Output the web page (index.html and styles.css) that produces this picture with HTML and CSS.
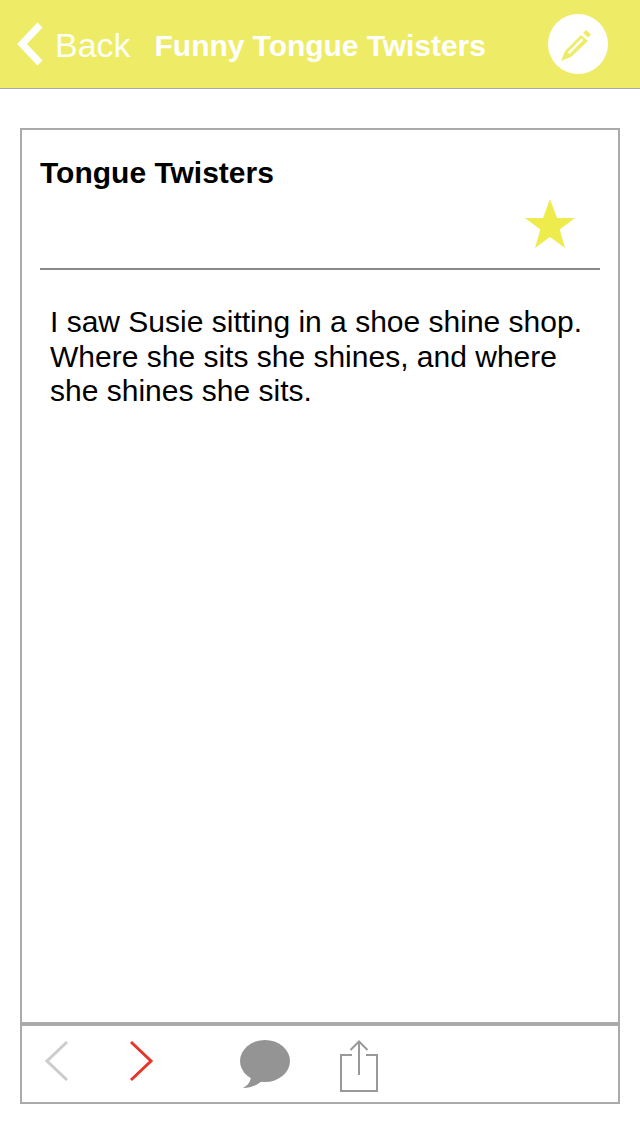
FILE: index.html

```html
<!DOCTYPE html>
<html lang="en">
<head>
    <meta charset="UTF-8">
    <meta name="viewport" content="width=device-width, initial-scale=1.0">
    <title>Funny Tongue Twisters</title>
    <link rel="stylesheet" href="styles.css">
</head>
<body>
    <header class="nav-bar">
        <svg class="back-icon" width="26" height="44" viewBox="0 0 26 44">
            <polyline points="23,3 5,22 23,41" fill="none" stroke="#fff" stroke-width="7"/>
        </svg>
        <span class="back-label">Back</span>
        <span class="nav-title">Funny Tongue Twisters</span>
        <button class="edit-button">
            <svg width="36" height="36" viewBox="0 0 36 36">
                <!-- pencil body, hollow stripe and eraser -->
                <path d="M1 35 L5 25 L21 9 L28 15 L11 31 Z" fill="#eeec66"/>
                <path d="M7.500 26.500 L21.500 12.500 L23.500 14 L9.500 28 Z" fill="#fff"/>
                <path d="M23 7 L26 4 L31 8.500 L28 11.500 Z" fill="#eeec66"/>
            </svg>
        </button>
    </header>

    <main class="card">
        <section class="note">
            <h1 class="note-title">Tongue Twisters</h1>
            <div class="note-star">
                <svg width="52" height="52" viewBox="0 0 52 52">
                    <polygon points="26,1 33,20 51,20 35.700,31.500 41,50 26,39 11,50 16.300,31.500 1,20 19,20" fill="#eeec4c"/>
                </svg>
            </div>
            <hr class="note-rule">
            <p class="note-text">I saw Susie sitting in a shoe shine shop. Where she sits she shines, and where she shines she sits.</p>
        </section>

        <footer class="toolbar">
            <svg class="tool-prev" width="26" height="42" viewBox="0 0 26 42">
                <polyline points="23,2 3,21 23,40" fill="none" stroke="#ccc" stroke-width="3"/>
            </svg>
            <svg class="tool-next" width="26" height="42" viewBox="0 0 26 42">
                <polyline points="3,2 23,21 3,40" fill="none" stroke="#e8352a" stroke-width="3"/>
            </svg>
            <svg class="tool-comment" width="54" height="50" viewBox="0 0 54 50">
                <ellipse cx="27" cy="22" rx="25" ry="21" fill="#949494"/>
                <path d="M13 36 C13 43 10 46 5 49 C12 49 18 47 24 42 Z" fill="#949494"/>
            </svg>
            <svg class="tool-share" width="42" height="54" viewBox="0 0 42 54">
                <path d="M14 16 H3 V52 H39 V16 H28" fill="none" stroke="#999" stroke-width="2"/>
                <path d="M21 36 V3 M12.500 11 L21 2.500 L29.500 11" fill="none" stroke="#999" stroke-width="2"/>
            </svg>
        </footer>
    </main>
</body>
</html>
```

FILE: styles.css

```css
html, body {
    height: 100%;
}

body {
    margin: 0;
    background: #fff;
    font-family: "Liberation Sans", Arial, sans-serif;
    color: #000;
    overflow: hidden;
}

.nav-bar {
    height: 88px;
    display: flex;
    align-items: center;
    padding-left: 17px;
    background: #eeec66;
    border-bottom: 1px solid #aaa;
    color: #fff;
}

.back-icon {
    flex: none;
}

.back-label {
    margin-left: 12px;
    padding-top: 2px;
    font-size: 34px;
    opacity: 0.95;
}

.nav-title {
    margin-left: 24px;
    padding-top: 4px;
    font-size: 30px;
    font-weight: 700;
    letter-spacing: -0.05px;
}

.edit-button {
    width: 60px;
    height: 60px;
    margin-left: auto;
    margin-right: 32px;
    padding: 0;
    display: flex;
    align-items: center;
    justify-content: center;
    border: none;
    border-radius: 50%;
    background: #fff;
}

.card {
    height: 972px;
    margin: 39px 20px 0;
    display: flex;
    flex-direction: column;
    border: 2px solid #aaa;
}

.note {
    flex: 1;
    padding: 0 18px;
}

.note-title {
    margin: 0;
    padding-top: 26px;
    font-size: 30px;
    line-height: 34px;
    font-weight: 700;
}

.note-star {
    display: flex;
    justify-content: flex-end;
    padding: 8px 24px 0 0;
    height: 60px;
}

.note-rule {
    height: 2px;
    margin: 10px 0 0;
    border: none;
    background: #888;
}

.note-text {
    margin: 0;
    padding: 35px 10px 0;
    font-size: 30px;
    line-height: 34.5px;
}

.toolbar {
    height: 76px;
    display: flex;
    align-items: center;
    border-top: 4px solid #aaa;
}

.tool-prev {
    margin-left: 22px;
    margin-bottom: 6px;
}

.tool-next {
    margin-left: 58px;
    margin-bottom: 6px;
}

.tool-comment {
    margin-left: 84px;
}

.tool-share {
    margin-left: 46px;
    margin-top: 4px;
}
```
